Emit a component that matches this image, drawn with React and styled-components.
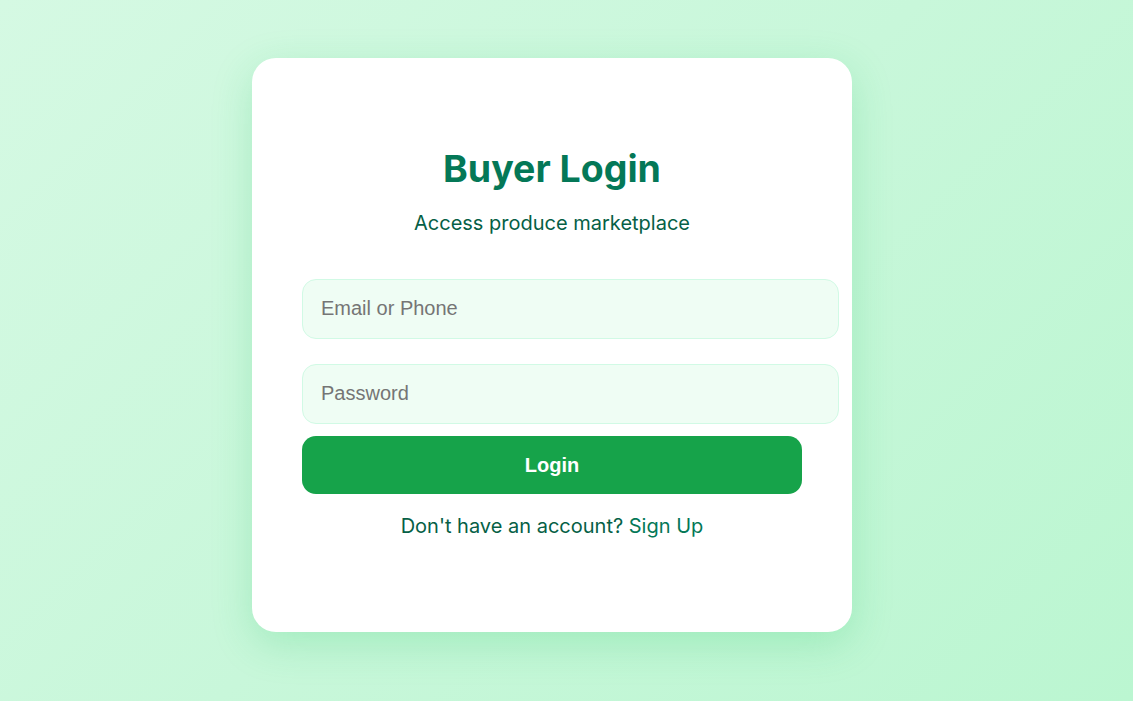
import React from "react";
import styled, { createGlobalStyle } from "styled-components";

const Global = createGlobalStyle`
  html, body { margin: 0; padding: 0; }
  body {
    font-family: Inter, "Noto Sans", sans-serif;
    background: linear-gradient(135deg, #d5f9e3 0%, #c8f7da 50%, #bbf6d1 100%);
    min-height: 100vh;
  }
`;

const Page = styled.div`
  min-height: 701px;
  box-sizing: border-box;
  display: flex;
  align-items: flex-start;
  justify-content: flex-start;
  padding: 58px 0 0 252px;
`;

const Card = styled.div`
  width: 600px;
  height: 574px;
  box-sizing: border-box;
  background: #ffffff;
  border-radius: 24px;
  padding: 89px 50px 0;
  box-shadow: 0 12px 40px rgba(34, 197, 94, 0.22);
  display: flex;
  flex-direction: column;
  align-items: stretch;
  text-align: center;
`;

const Title = styled.h1`
  margin: 0;
  font-family: Inter, sans-serif;
  font-size: 37.5px;
  line-height: 44px;
  font-weight: 700;
  color: #047857;
`;

const Subtitle = styled.p`
  margin: 20px 0 44px;
  font-family: Inter, sans-serif;
  font-size: 20px;
  line-height: 24px;
  color: #065f46;
`;

const Input = styled.input`
  display: block;
  width: 100%;
  box-sizing: content-box;
  height: 56px;
  padding: 0 17px 2px 18px;
  margin: 0 0 ${(p) => p.$gap}px;
  border: 1px solid #d1fae5;
  border-radius: 14px;
  background: #effdf4;
  font-family: "Liberation Sans", Arial, sans-serif;
  font-size: 20px;
  color: #1f2937;
  outline: none;
  &::placeholder { color: #757575; }
`;

const Button = styled.button`
  width: 100%;
  height: 58px;
  border: none;
  border-radius: 14px;
  background: #16a34a;
  color: #ffffff;
  font-family: "Liberation Sans", Arial, sans-serif;
  font-size: 20px;
  font-weight: 700;
  cursor: pointer;
`;

const Footer = styled.p`
  margin: 20px 0 0;
  font-family: Inter, sans-serif;
  font-size: 20px;
  line-height: 24px;
  color: #065f46;
`;

const Link = styled.a`
  color: #047857;
  text-decoration: none;
`;

export default function App() {
  return (
    <>
      <Global />
      <Page>
        <Card>
          <Title>Buyer Login</Title>
          <Subtitle>Access produce marketplace</Subtitle>
          <Input $gap={25} placeholder="Email or Phone" />
          <Input $gap={12} type="password" placeholder="Password" />
          <Button>Login</Button>
          <Footer>
            Don't have an account? <Link href="#">Sign Up</Link>
          </Footer>
        </Card>
      </Page>
    </>
  );
}
